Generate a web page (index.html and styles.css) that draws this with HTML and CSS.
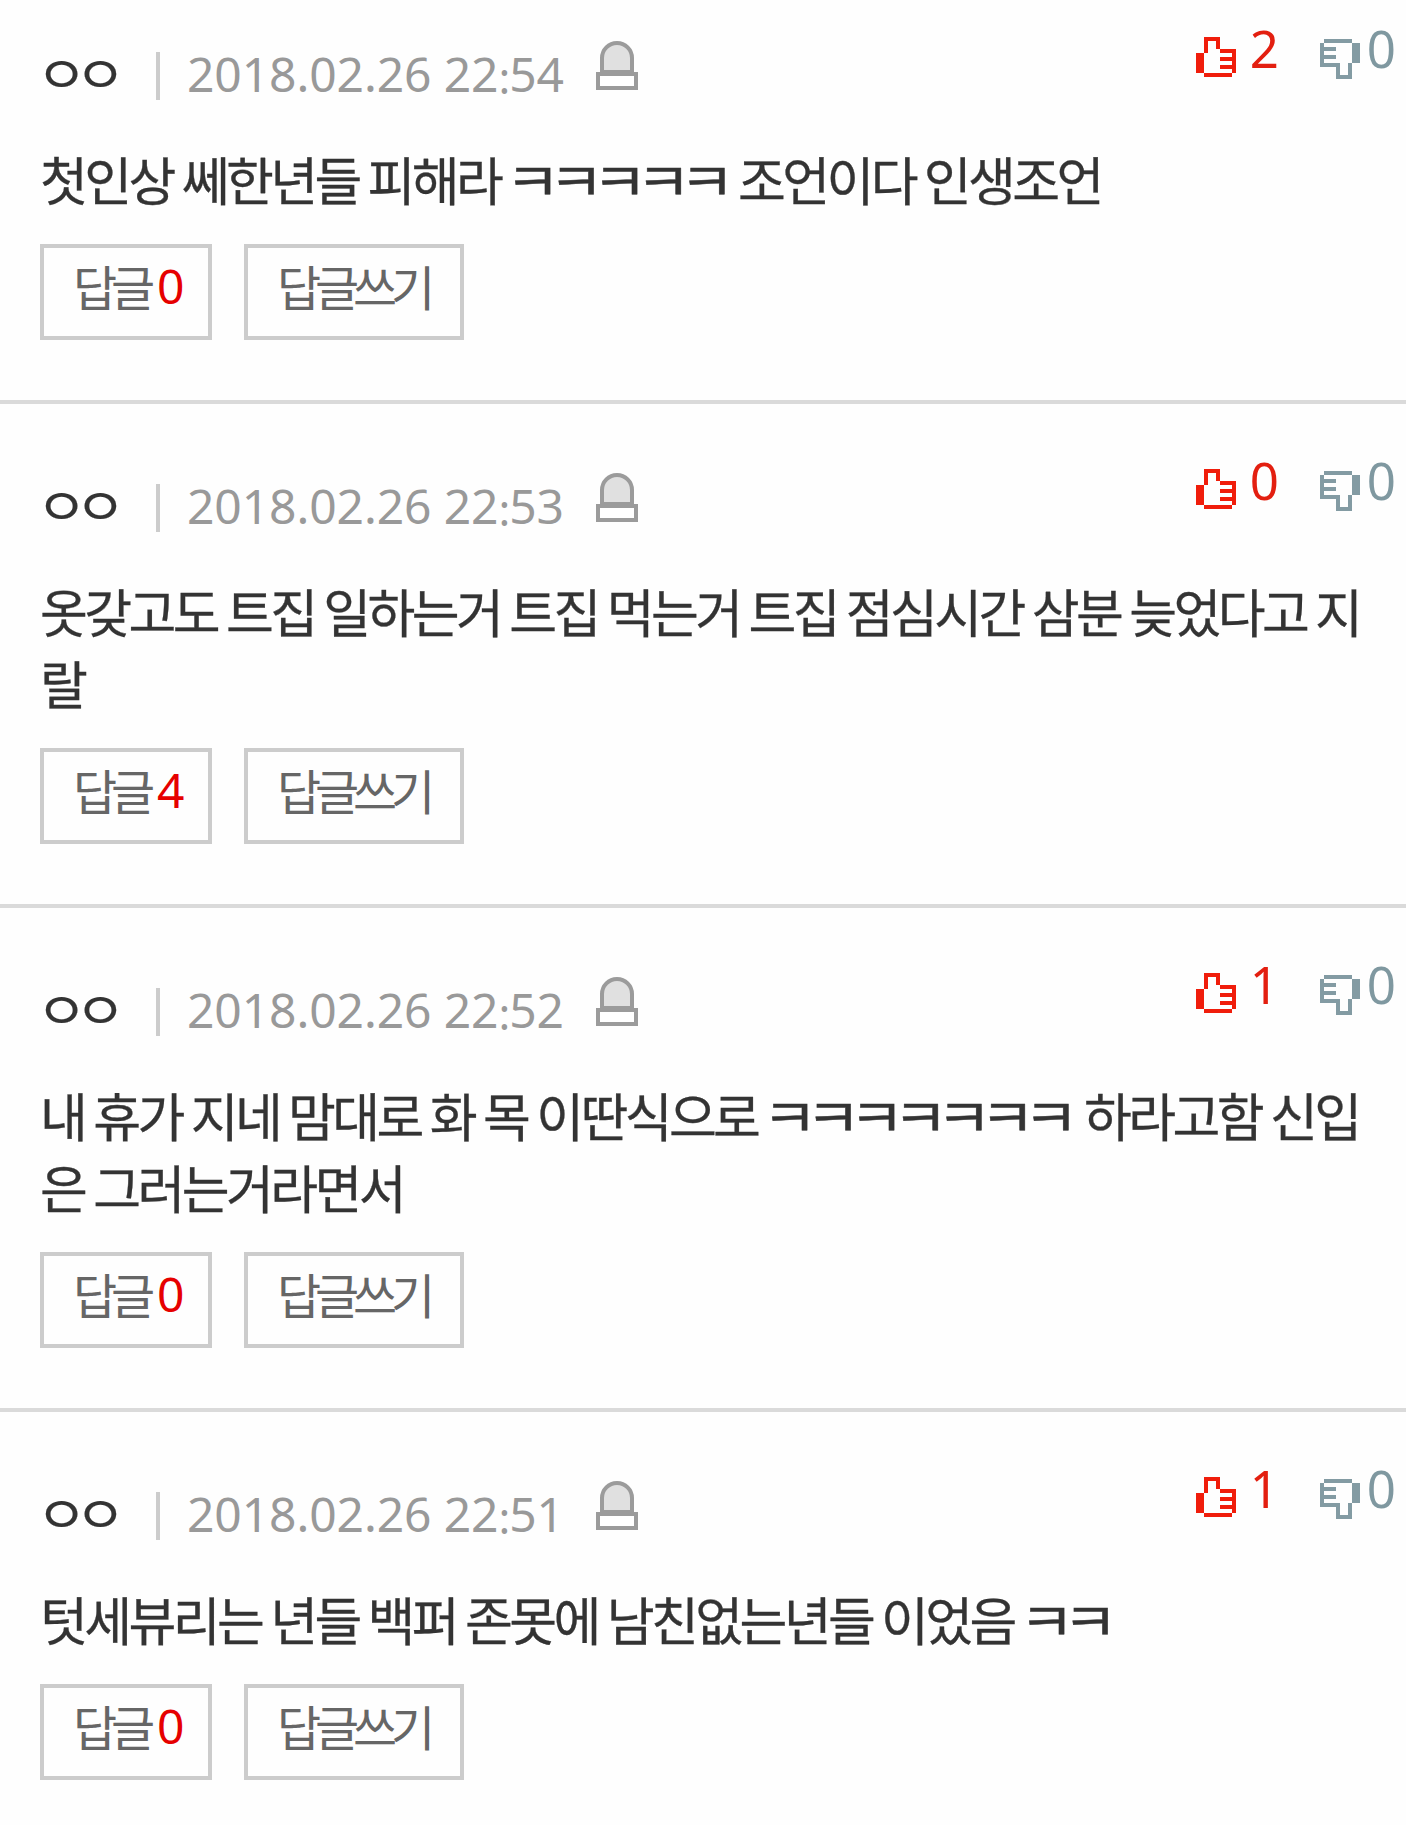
FILE: index.html
```
<!DOCTYPE html>
<html lang="ko">
<head>
    <meta charset="UTF-8">
    <meta name="viewport" content="width=device-width, initial-scale=1.0">
    <title>댓글</title>
    <link rel="stylesheet" href="styles.css">
</head>
<body>
    <svg class="sprite" width="0" height="0">
        <symbol id="siren" viewBox="0 0 42 50">
            <path d="M6 32V18a15 15 0 0 1 30 0v14z" fill="#e0e0e0" stroke="#9b9b9b" stroke-width="4"/>
            <path d="M2 34h38v14H2z" fill="#fff" stroke="#9b9b9b" stroke-width="4"/>
        </symbol>
        <symbol id="up" viewBox="0 0 10 10">
            <path d="M2 0h4v3h4v6h-1v1H2V9H0V4h2zM3 1v3H2v5h7V8H6V7h3V6H6V5h3V4H6V3H5V1z" fill-rule="evenodd"/>
        </symbol>
        <symbol id="down" viewBox="0 0 10 10">
            <path d="M1 0h7v1H1zM0 1h1v1h3v1H1v1h3v1H1v1h4v3h2V6h1v4H4V7H0zM8 1h2v5H8z"/>
        </symbol>
    </svg>

    <ul class="comment-list">
        <li class="comment">
            <div class="info">
                <span class="name"><b>ㅇㅇ</b></span>
                <span class="date">2018.02.26 22<i>:</i>54</span>
                <svg class="siren"><use href="#siren"/></svg>
                <div class="vote">
                    <span class="up"><svg><use href="#up"/></svg>2</span>
                    <span class="down"><svg><use href="#down"/></svg>0</span>
                </div>
            </div>
            <p class="text">첫인상 쎄한년들 피해라 <b class="k5">ㅋㅋㅋㅋㅋ</b> 조언이다 인생조언</p>
            <div class="buttons">
                <a class="btn">답글<em>0</em></a>
                <a class="btn write">답글쓰기</a>
            </div>
        </li>
        <li class="comment">
            <div class="info">
                <span class="name"><b>ㅇㅇ</b></span>
                <span class="date">2018.02.26 22<i>:</i>53</span>
                <svg class="siren"><use href="#siren"/></svg>
                <div class="vote">
                    <span class="up"><svg><use href="#up"/></svg>0</span>
                    <span class="down"><svg><use href="#down"/></svg>0</span>
                </div>
            </div>
            <p class="text">옷갖고도 트집 일하는거 트집 먹는거 트집 점심시간 삼분 늦었다고 지<br>랄</p>
            <div class="buttons">
                <a class="btn">답글<em>4</em></a>
                <a class="btn write">답글쓰기</a>
            </div>
        </li>
        <li class="comment">
            <div class="info">
                <span class="name"><b>ㅇㅇ</b></span>
                <span class="date">2018.02.26 22<i>:</i>52</span>
                <svg class="siren"><use href="#siren"/></svg>
                <div class="vote">
                    <span class="up"><svg><use href="#up"/></svg>1</span>
                    <span class="down"><svg><use href="#down"/></svg>0</span>
                </div>
            </div>
            <p class="text">내 휴가 지네 맘대로 화 목 이딴식으로 <b class="k7">ㅋㅋㅋㅋㅋㅋㅋ</b> 하라고함 신입<br>은 그러는거라면서</p>
            <div class="buttons">
                <a class="btn">답글<em>0</em></a>
                <a class="btn write">답글쓰기</a>
            </div>
        </li>
        <li class="comment">
            <div class="info">
                <span class="name"><b>ㅇㅇ</b></span>
                <span class="date">2018.02.26 22<i>:</i>51</span>
                <svg class="siren"><use href="#siren"/></svg>
                <div class="vote">
                    <span class="up"><svg><use href="#up"/></svg>1</span>
                    <span class="down"><svg><use href="#down"/></svg>0</span>
                </div>
            </div>
            <p class="text">텃세뷰리는 년들 백퍼 존못에 남친없는년들 이었음 <b>ㅋㅋ</b></p>
            <div class="buttons">
                <a class="btn">답글<em>0</em></a>
                <a class="btn write">답글쓰기</a>
            </div>
        </li>
    </ul>
</body>
</html>
```
FILE: styles.css
```
body {
    margin: 0;
    background: #fefefe;
    color: #333;
    font-family: "Noto Sans", "Noto Sans CJK KR", sans-serif;
}

.sprite {
    display: block;
}

.comment-list {
    margin: 0;
    padding: 0;
    list-style: none;
}

.comment {
    padding: 52px 0 60px 40px;
    border-top: 4px solid #dadada;
}

.comment:first-child {
    padding-top: 24px;
    border-top: 0;
}

.comment:last-child {
    padding-bottom: 40px;
}

.info {
    display: flex;
    height: 104px;
}

.name {
    width: 116px;
    height: 48px;
    margin-top: 28px;
    border-right: 4px solid #ccc;
    font-size: 48px;
    line-height: 45px;
    white-space: nowrap;
}

/* single jamo are drawn a little wider than syllables */
.name b {
    display: inline-block;
    margin-left: -4px;
    font-weight: 400;
    letter-spacing: -10.8px;
    transform: scale(1.16, 1.08);
    transform-origin: 0 60%;
    -webkit-text-stroke: 0.2px #333;
}

.date {
    width: 380px;
    margin: 28px 0 0 27px;
    color: #999;
    font-size: 48px;
    line-height: 44px;
    letter-spacing: -0.1px;
    white-space: nowrap;
}

.date i {
    position: relative;
    top: 2px;
    margin: 0 -1px 0 0;
    font-size: 44px;
    font-style: normal;
}

.siren {
    width: 42px;
    height: 50px;
    margin: 16px 0 0 29px;
}

.vote {
    display: flex;
    margin-left: auto;
    padding-right: 10px;
    font-size: 51px;
    line-height: 49px;
}

.vote svg {
    position: relative;
    top: 9px;
    width: 40px;
    height: 40px;
}

.up {
    width: 124px;
    color: #e31f10;
    fill: #f01d0b;
}

.up svg {
    margin-right: 14px;
}

.down {
    color: #7f98a0;
    fill: #839ba3;
}

.vote .down svg {
    top: 11px;
    margin-right: 7px;
}

.text {
    margin: 15px 0 29px;
    font-family: "Noto Sans CJK KR", sans-serif;
    font-size: 52px;
    line-height: 72px;
    letter-spacing: -3.6px;
    word-spacing: -2px;
    white-space: nowrap;
    -webkit-text-stroke: 0.3px #333;
}

.text b {
    display: inline-block;
    margin-left: -4px;
    font-weight: 400;
    letter-spacing: -10.3px;
    transform: scaleX(1.16);
    transform-origin: 0 50%;
    -webkit-text-stroke: 0.5px #333;
}

.text .k5 {
    margin-right: 36px;
}

.text .k7 {
    margin-right: 50px;
}

.buttons {
    display: flex;
    gap: 32px;
}

.btn {
    box-sizing: border-box;
    width: 172px;
    height: 96px;
    padding-left: 29px;
    border: 4px solid #ccc;
    color: #666;
    font-family: "Noto Sans CJK KR", sans-serif;
    font-size: 48px;
    line-height: 74px;
    letter-spacing: -6.2px;
    white-space: nowrap;
}

.btn.write {
    width: 220px;
}

.btn em {
    position: relative;
    top: -2px;
    margin-left: 8px;
    color: #e60000;
    font-family: "Noto Sans", sans-serif;
    font-style: normal;
    letter-spacing: 0;
}
```
